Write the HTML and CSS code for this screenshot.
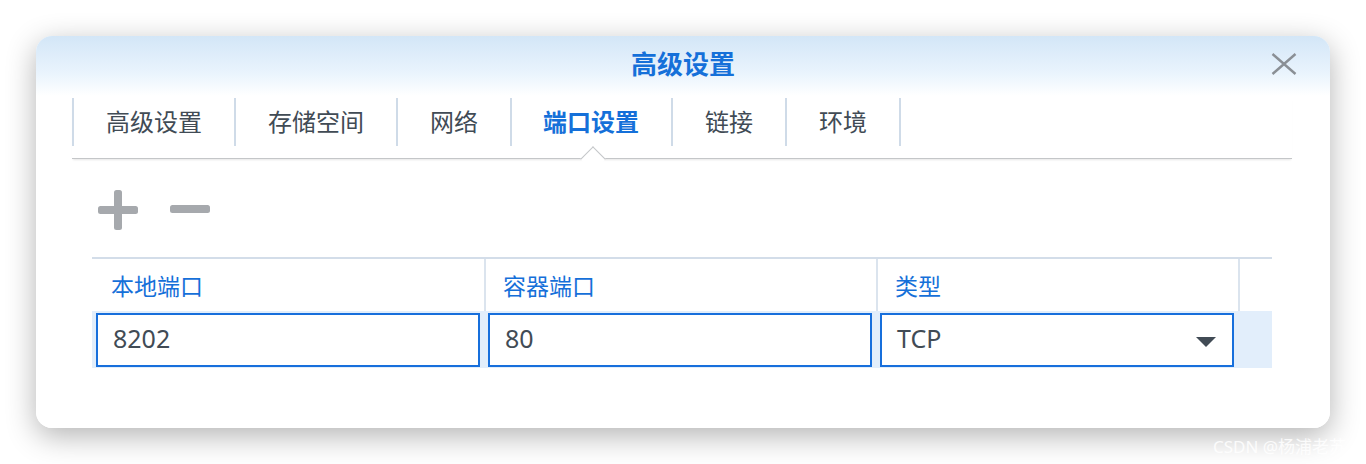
FILE: index.html
```html
<!DOCTYPE html>
<html lang="zh">
<head>
<meta charset="utf-8">
<title>高级设置</title>
<link rel="stylesheet" href="styles.css">
</head>
<body>
<div class="stage">
  <div class="dialog">
    <div class="header">
      <h1 class="title">高级设置</h1>
      <button class="close" aria-label="关闭">
        <svg width="26" height="22" viewBox="0 0 26 22"><path d="M1.5 1 L24.5 21 M24.5 1 L1.5 21" stroke="#8a8f95" stroke-width="2.4" fill="none"/></svg>
      </button>
    </div>
    <div class="tabbar">
      <div class="tab">高级设置</div>
      <div class="tab">存储空间</div>
      <div class="tab">网络</div>
      <div class="tab active">端口设置</div>
      <div class="tab">链接</div>
      <div class="tab">环境</div>
    </div>
    <div class="content">
      <div class="toolbar">
        <span class="tool">
          <svg width="40" height="40" viewBox="0 0 40 40"><rect x="0" y="16" width="40" height="8" rx="2.5" fill="#a6a9ad"/><rect x="16" y="0" width="8" height="40" rx="2.5" fill="#a6a9ad"/></svg>
        </span>
        <span class="tool">
          <svg width="40" height="40" viewBox="0 0 40 40"><rect x="0" y="15" width="40" height="8" rx="2.5" fill="#a6a9ad"/></svg>
        </span>
      </div>
      <div class="table">
        <div class="thead">
          <div class="th">本地端口</div>
          <div class="th">容器端口</div>
          <div class="th">类型</div>
          <div class="th"></div>
        </div>
        <div class="trow">
          <div class="field w1">8202</div>
          <div class="field w2">80</div>
          <div class="field w3 select">TCP<span class="arrow"></span></div>
        </div>
      </div>
    </div>
  </div>
  <div class="watermark">CSDN @杨浦老苏</div>
</div>
</body>
</html>
```

FILE: styles.css
```css
* { box-sizing: border-box; }
html, body {
  margin: 0;
  padding: 0;
  background: #ffffff;
}
body {
  font-family: "Noto Sans", "Noto Sans CJK SC", sans-serif;
  color: #414b55;
}
.stage {
  position: relative;
  width: 1366px;
  height: 464px;
  padding: 36px 36px 0 36px;
}
.dialog {
  position: relative;
  width: 1294px;
  height: 392px;
  border-radius: 16px;
  background: linear-gradient(to bottom, #d3e6f7 0px, #eaf4fd 38px, #ffffff 60px);
  box-shadow: 0 8px 30px rgba(0, 0, 0, 0.30);
}
.header {
  height: 62px;
  display: flex;
  align-items: center;
  justify-content: center;
  padding-bottom: 6px;
}
.title {
  margin: 0;
  font-size: 26px;
  font-weight: 700;
  color: #1570d9;
  line-height: 1;
}
.close {
  position: absolute;
  top: 17px;
  right: 33px;
  width: 26px;
  height: 22px;
  padding: 0;
  border: 0;
  background: none;
  display: block;
}
.close svg { display: block; }
.tabbar {
  margin: 0 38px 0 36px;
  height: 61px;
  padding-bottom: 12px;
  display: flex;
  border-bottom: 1px solid #c4c6c8;
  box-shadow: 0 2px 2px -1px rgba(0, 0, 0, 0.10);
}
.tab {
  position: relative;
  height: 48px;
  padding: 0 32px 3px 32px;
  display: flex;
  align-items: center;
  font-size: 24px;
  color: #414b55;
  border-right: 2px solid #cfdbe8;
  white-space: nowrap;
}
.tab:first-child { border-left: 2px solid #cfdbe8; padding-left: 32px; }
.tab.active {
  color: #1570d9;
  font-weight: 700;
  padding-left: 31px;
  padding-right: 32px;
}
.tab.active::after {
  content: "";
  position: absolute;
  left: 72px;
  top: 52px;
  width: 17px;
  height: 17px;
  background: #ffffff;
  border-top: 1px solid #c4c6c8;
  border-left: 1px solid #c4c6c8;
  transform: rotate(45deg);
}
.content {
  padding: 31px 58px 0 56px;
}
.toolbar {
  display: flex;
  gap: 32px;
  padding-left: 6px;
  height: 40px;
}
.tool svg { display: block; }
.table {
  margin-top: 27px;
  border-top: 2px solid #d3dde9;
}
.thead {
  display: grid;
  grid-template-columns: 394px 392px 362px 1fr;
  height: 52px;
}
.th {
  display: flex;
  align-items: center;
  padding: 0 0 0 17px;
  font-size: 23px;
  color: #1570d9;
  border-right: 2px solid #dbe4ee;
}
.th:first-child { padding-left: 19px; }
.th:last-child { border-right: 0; }
.trow {
  display: flex;
  gap: 8px;
  padding: 2px 4px 1px 4px;
  height: 57px;
  background: #e2eefb;
}
.field {
  position: relative;
  height: 54px;
  border: 2px solid #176fdc;
  background: #ffffff;
  padding: 0 15px 4px 15px;
  display: flex;
  align-items: center;
  font-size: 25px;
  color: #414b55;
}
.w1 { width: 384px; }
.w2 { width: 384px; }
.w3 { width: 354px; }
.arrow {
  position: absolute;
  right: 16px;
  top: 22px;
  width: 0;
  height: 0;
  border-left: 10px solid transparent;
  border-right: 10px solid transparent;
  border-top: 10px solid #414b55;
}
.watermark {
  position: absolute;
  left: 1213px;
  top: 433px;
  font-size: 17px;
  color: rgba(255, 255, 255, 0.85);
  white-space: nowrap;
}
```
